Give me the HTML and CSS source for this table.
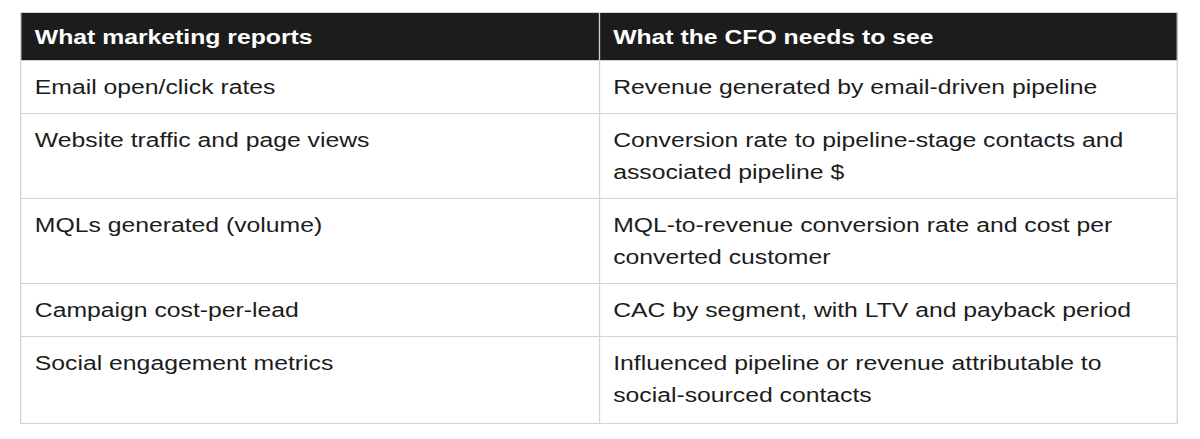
FILE: index.html
```html
<!DOCTYPE html>
<html lang="en">
<head>
<meta charset="utf-8">
<title>Marketing vs CFO</title>
<link rel="stylesheet" href="styles.css">
</head>
<body>
<table class="compare">
  <thead>
    <tr>
      <th>What marketing reports</th>
      <th>What the CFO needs to see</th>
    </tr>
  </thead>
  <tbody>
    <tr>
      <td>Email open/click rates</td>
      <td>Revenue generated by email-driven pipeline</td>
    </tr>
    <tr>
      <td>Website traffic and page views</td>
      <td>Conversion rate to pipeline-stage contacts and associated pipeline $</td>
    </tr>
    <tr>
      <td>MQLs generated (volume)</td>
      <td>MQL-to-revenue conversion rate and cost per converted customer</td>
    </tr>
    <tr>
      <td>Campaign cost-per-lead</td>
      <td>CAC by segment, with LTV and payback period</td>
    </tr>
    <tr class="last">
      <td>Social engagement metrics</td>
      <td>Influenced pipeline or revenue attributable to social-sourced contacts</td>
    </tr>
  </tbody>
</table>
</body>
</html>
```
FILE: styles.css
```css
html, body {
  margin: 0;
  padding: 0;
  background: #ffffff;
}
body {
  padding: 12px 0 0 20px;
  font-family: "Liberation Sans", Arial, sans-serif;
  color: #1c1c1c;
}
/* the reference text is horizontally stretched; the table is laid out
   at a narrower width and widened as a whole */
.compare {
  width: 936px;
  border-collapse: collapse;
  table-layout: fixed;
  font-size: 20px;
  line-height: 32px;
  transform: scaleX(1.237);
  transform-origin: left top;
}
.compare th,
.compare td {
  width: 50%;
  border: 1px solid #d3d3d3;
  text-align: left;
  vertical-align: top;
  padding: 10px 24px 10px 11px;
  hyphens: manual;
}
.compare th {
  background: #1c1c1c;
  color: #ffffff;
  font-weight: bold;
  padding-top: 8px;
  padding-bottom: 7px;
}
.compare .last td {
  padding-bottom: 12px;
}
```
